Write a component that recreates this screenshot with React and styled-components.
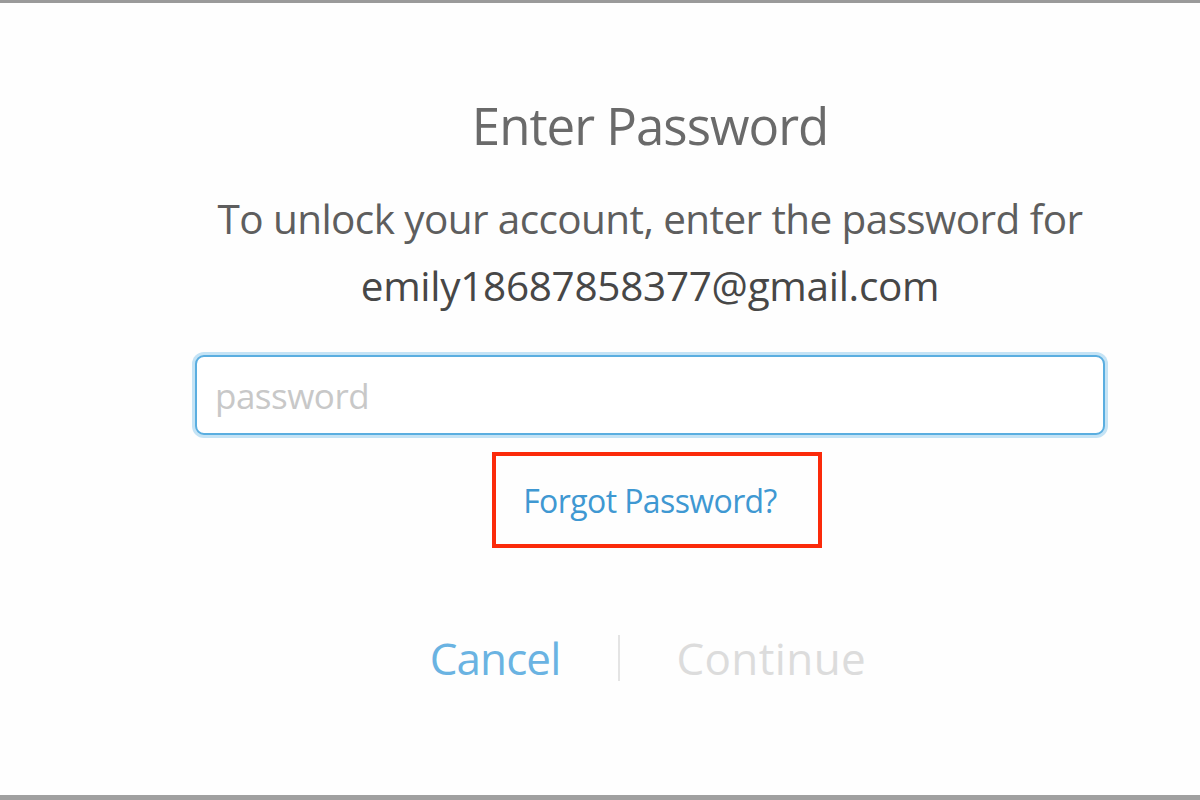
import styled, { createGlobalStyle } from 'styled-components'

const Global = createGlobalStyle`
    html, body {
        margin: 0;
        padding: 0;
        background: #fefefe;
    }
    * {
        box-sizing: border-box;
    }
`

const Frame = styled.div`
    width: 1200px;
    height: 800px;
    border-top: 3px solid #9a9a9a;
    border-bottom: 5px solid #a0a0a0;
    background: #fefefe;
    font-family: "Open Sans", "Noto Sans", sans-serif;
    display: flex;
    flex-direction: column;
    align-items: center;
    padding: 0 95px 0 195px;
    overflow: hidden;
`

const Title = styled.h1`
    margin: 92px 0 0;
    font-size: 51px;
    font-weight: 400;
    line-height: 60px;
    color: #6a6a6a;
    letter-spacing: -1px;
`

const Message = styled.p`
    margin: 30px 0 0;
    font-size: 40.5px;
    line-height: 67px;
    color: #5e5e5e;
    text-align: center;
    letter-spacing: -0.6px;
    white-space: nowrap;
`

const Email = styled.span`
    display: block;
    color: #474747;
    letter-spacing: -0.3px;
`

const Field = styled.input`
    margin-top: 36px;
    width: 910px;
    height: 80px;
    border: 2px solid #5aaee0;
    border-radius: 9px;
    box-shadow: 0 0 0 3px #c4e3f5;
    padding: 0 18px;
    font-family: inherit;
    font-size: 35px;
    color: #555;
    outline: none;
    &::placeholder {
        color: #c8c8c8;
        letter-spacing: -0.5px;
    }
`

const Highlight = styled.div`
    margin: 17px 0 0 14px;
    width: 330px;
    height: 96px;
    padding-right: 14px;
    border: 4px solid #fb2a0a;
    display: flex;
    align-items: center;
    justify-content: center;
`

const Link = styled.a`
    font-size: 32px;
    color: #3f98d2;
    text-decoration: none;
    letter-spacing: -0.6px;
    cursor: pointer;
`

const Actions = styled.div`
    margin-top: 80px;
    display: flex;
    align-items: center;
    padding-right: 4px;
`

const Action = styled.button`
    border: none;
    background: none;
    padding: 0;
    font-family: inherit;
    font-size: 44px;
    letter-spacing: ${(props) => props.disabled ? '0.4px' : '-0.9px'};
    color: ${(props) => props.disabled ? '#dcdcdc' : '#6ab3e2'};
    cursor: ${(props) => props.disabled ? 'default' : 'pointer'};
`

const Divider = styled.span`
    width: 2px;
    height: 46px;
    margin: 0 56px 0 58px;
    background: #e4e4e4;
`

const App = () => {
    return (
        <>
            <Global />
            <Frame>
                <Title>Enter Password</Title>
                <Message>
                    To unlock your account, enter the password for
                    <Email>emily18687858377@gmail.com</Email>
                </Message>
                <Field type="password" placeholder="password" />
                <Highlight>
                    <Link>Forgot Password?</Link>
                </Highlight>
                <Actions>
                    <Action>Cancel</Action>
                    <Divider />
                    <Action disabled>Continue</Action>
                </Actions>
            </Frame>
        </>
    )
}

export default App
